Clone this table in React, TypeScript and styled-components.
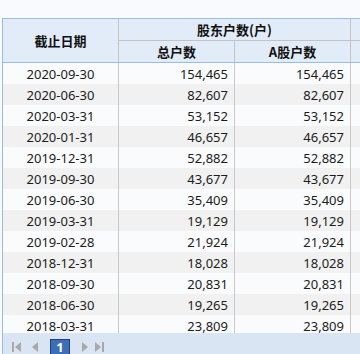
import React from "react";
import styled, { createGlobalStyle } from "styled-components";

const Global = createGlobalStyle`
  html, body { margin: 0; padding: 0; background: #f8fafd; overflow: hidden; }
  body { font-family: "Noto Sans", "Noto Sans CJK SC", sans-serif; }
`;

const Page = styled.div`
  width: 360px;
  height: 354px;
  padding-top: 18px;
  padding-left: 2px;
  box-sizing: border-box;
  overflow: hidden;
`;

const Grid = styled.div`
  height: 336px;
  border-top: 1px solid #99bbe8;
  border-left: 1px solid #99bbe8;
  box-sizing: border-box;
  display: flex;
  flex-direction: column;
  overflow: hidden;
`;

const Header = styled.div`
  display: grid;
  grid-template-columns: repeat(4, 116px);
  grid-template-rows: 22px 21px;
  border-bottom: 1px solid #99bbe8;
  background: #e2ecf8;
  flex-shrink: 0;
`;

const HeadCell = styled.div<{ $col: string; $row: string; $bottom?: boolean }>`
  grid-column: ${(p) => p.$col};
  grid-row: ${(p) => p.$row};
  border-right: 1px solid #c3c3c3;
  border-bottom: ${(p) => (p.$bottom ? "1px solid #c3c3c3" : "none")};
  display: flex;
  align-items: center;
  justify-content: center;
  font-family: "Noto Sans CJK SC", "Noto Sans", sans-serif;
  font-weight: 700;
  font-size: 13px;
  color: #111;
  white-space: nowrap;
  overflow: hidden;
`;

const Body = styled.div`
  flex: 1;
  overflow: hidden;
`;

const Row = styled.div<{ $alt: boolean }>`
  display: grid;
  grid-template-columns: repeat(4, 116px);
  height: 21px;
  background: ${(p) => (p.$alt ? "#f1f1f1" : "#fafbfd")};
`;

const Cell = styled.div<{ $align: "center" | "right" }>`
  border-right: 1px solid #c8c8c8;
  display: flex;
  align-items: center;
  justify-content: ${(p) => (p.$align === "center" ? "center" : "flex-end")};
  padding-right: ${(p) => (p.$align === "right" ? "6px" : "0")};
  font-size: 13px;
  color: #1c1c1c;
  white-space: nowrap;
  overflow: hidden;
`;

const Pager = styled.div`
  height: 21px;
  flex-shrink: 0;
  background: #dae5f3;
  display: flex;
  align-items: flex-start;
  padding-top: 6px;
  padding-left: 8px;
  box-sizing: border-box;
  overflow: hidden;
`;

const NavIcon = styled.svg<{ $gap?: number }>`
  width: 12px;
  height: 10px;
  margin-top: 3px;
  margin-left: ${(p) => p.$gap ?? 0}px;
  flex-shrink: 0;
`;

const PageBox = styled.div`
  width: 20px;
  height: 15px;
  box-sizing: border-box;
  border: 1px solid #1d3f7c;
  border-bottom: none;
  background: #3b6fb6;
  color: #fff;
  font-family: "Noto Sans", sans-serif;
  font-weight: 700;
  font-size: 13px;
  line-height: 14px;
  display: flex;
  align-items: flex-start;
  justify-content: center;
  margin: 0 9px 0 9px;
  flex-shrink: 0;
`;

const rows: [string, string][] = [
  ["2020-09-30", "154,465"],
  ["2020-06-30", "82,607"],
  ["2020-03-31", "53,152"],
  ["2020-01-31", "46,657"],
  ["2019-12-31", "52,882"],
  ["2019-09-30", "43,677"],
  ["2019-06-30", "35,409"],
  ["2019-03-31", "19,129"],
  ["2019-02-28", "21,924"],
  ["2018-12-31", "18,028"],
  ["2018-09-30", "20,831"],
  ["2018-06-30", "19,265"],
  ["2018-03-31", "23,809"],
];

const grey = "#a9a9a9";

export default function App() {
  return (
    <Page>
      <Global />
      <Grid>
        <Header>
          <HeadCell $col="1" $row="1 / span 2">截止日期</HeadCell>
          <HeadCell $col="2 / span 2" $row="1" $bottom>股东户数(户)</HeadCell>
          <HeadCell $col="4" $row="1" $bottom></HeadCell>
          <HeadCell $col="2" $row="2">总户数</HeadCell>
          <HeadCell $col="3" $row="2">A股户数</HeadCell>
          <HeadCell $col="4" $row="2"></HeadCell>
        </Header>
        <Body>
          {rows.map(([d, n], i) => (
            <Row key={d} $alt={i % 2 === 1}>
              <Cell $align="center">{d}</Cell>
              <Cell $align="right">{n}</Cell>
              <Cell $align="right">{n}</Cell>
              <Cell $align="right"></Cell>
            </Row>
          ))}
        </Body>
        <Pager>
          <NavIcon viewBox="0 0 12 10">
            <rect x="1" y="0" width="2" height="10" fill={grey} />
            <polygon points="10,0 10,10 4,5" fill={grey} />
          </NavIcon>
          <NavIcon viewBox="0 0 12 10" $gap={6}>
            <polygon points="9,0 9,10 3,5" fill={grey} />
          </NavIcon>
          <PageBox>1</PageBox>
          <NavIcon viewBox="0 0 12 10">
            <polygon points="3,0 3,10 9,5" fill={grey} />
          </NavIcon>
          <NavIcon viewBox="0 0 12 10" $gap={2}>
            <polygon points="2,0 2,10 8,5" fill={grey} />
            <rect x="9" y="0" width="2" height="10" fill={grey} />
          </NavIcon>
        </Pager>
      </Grid>
    </Page>
  );
}
